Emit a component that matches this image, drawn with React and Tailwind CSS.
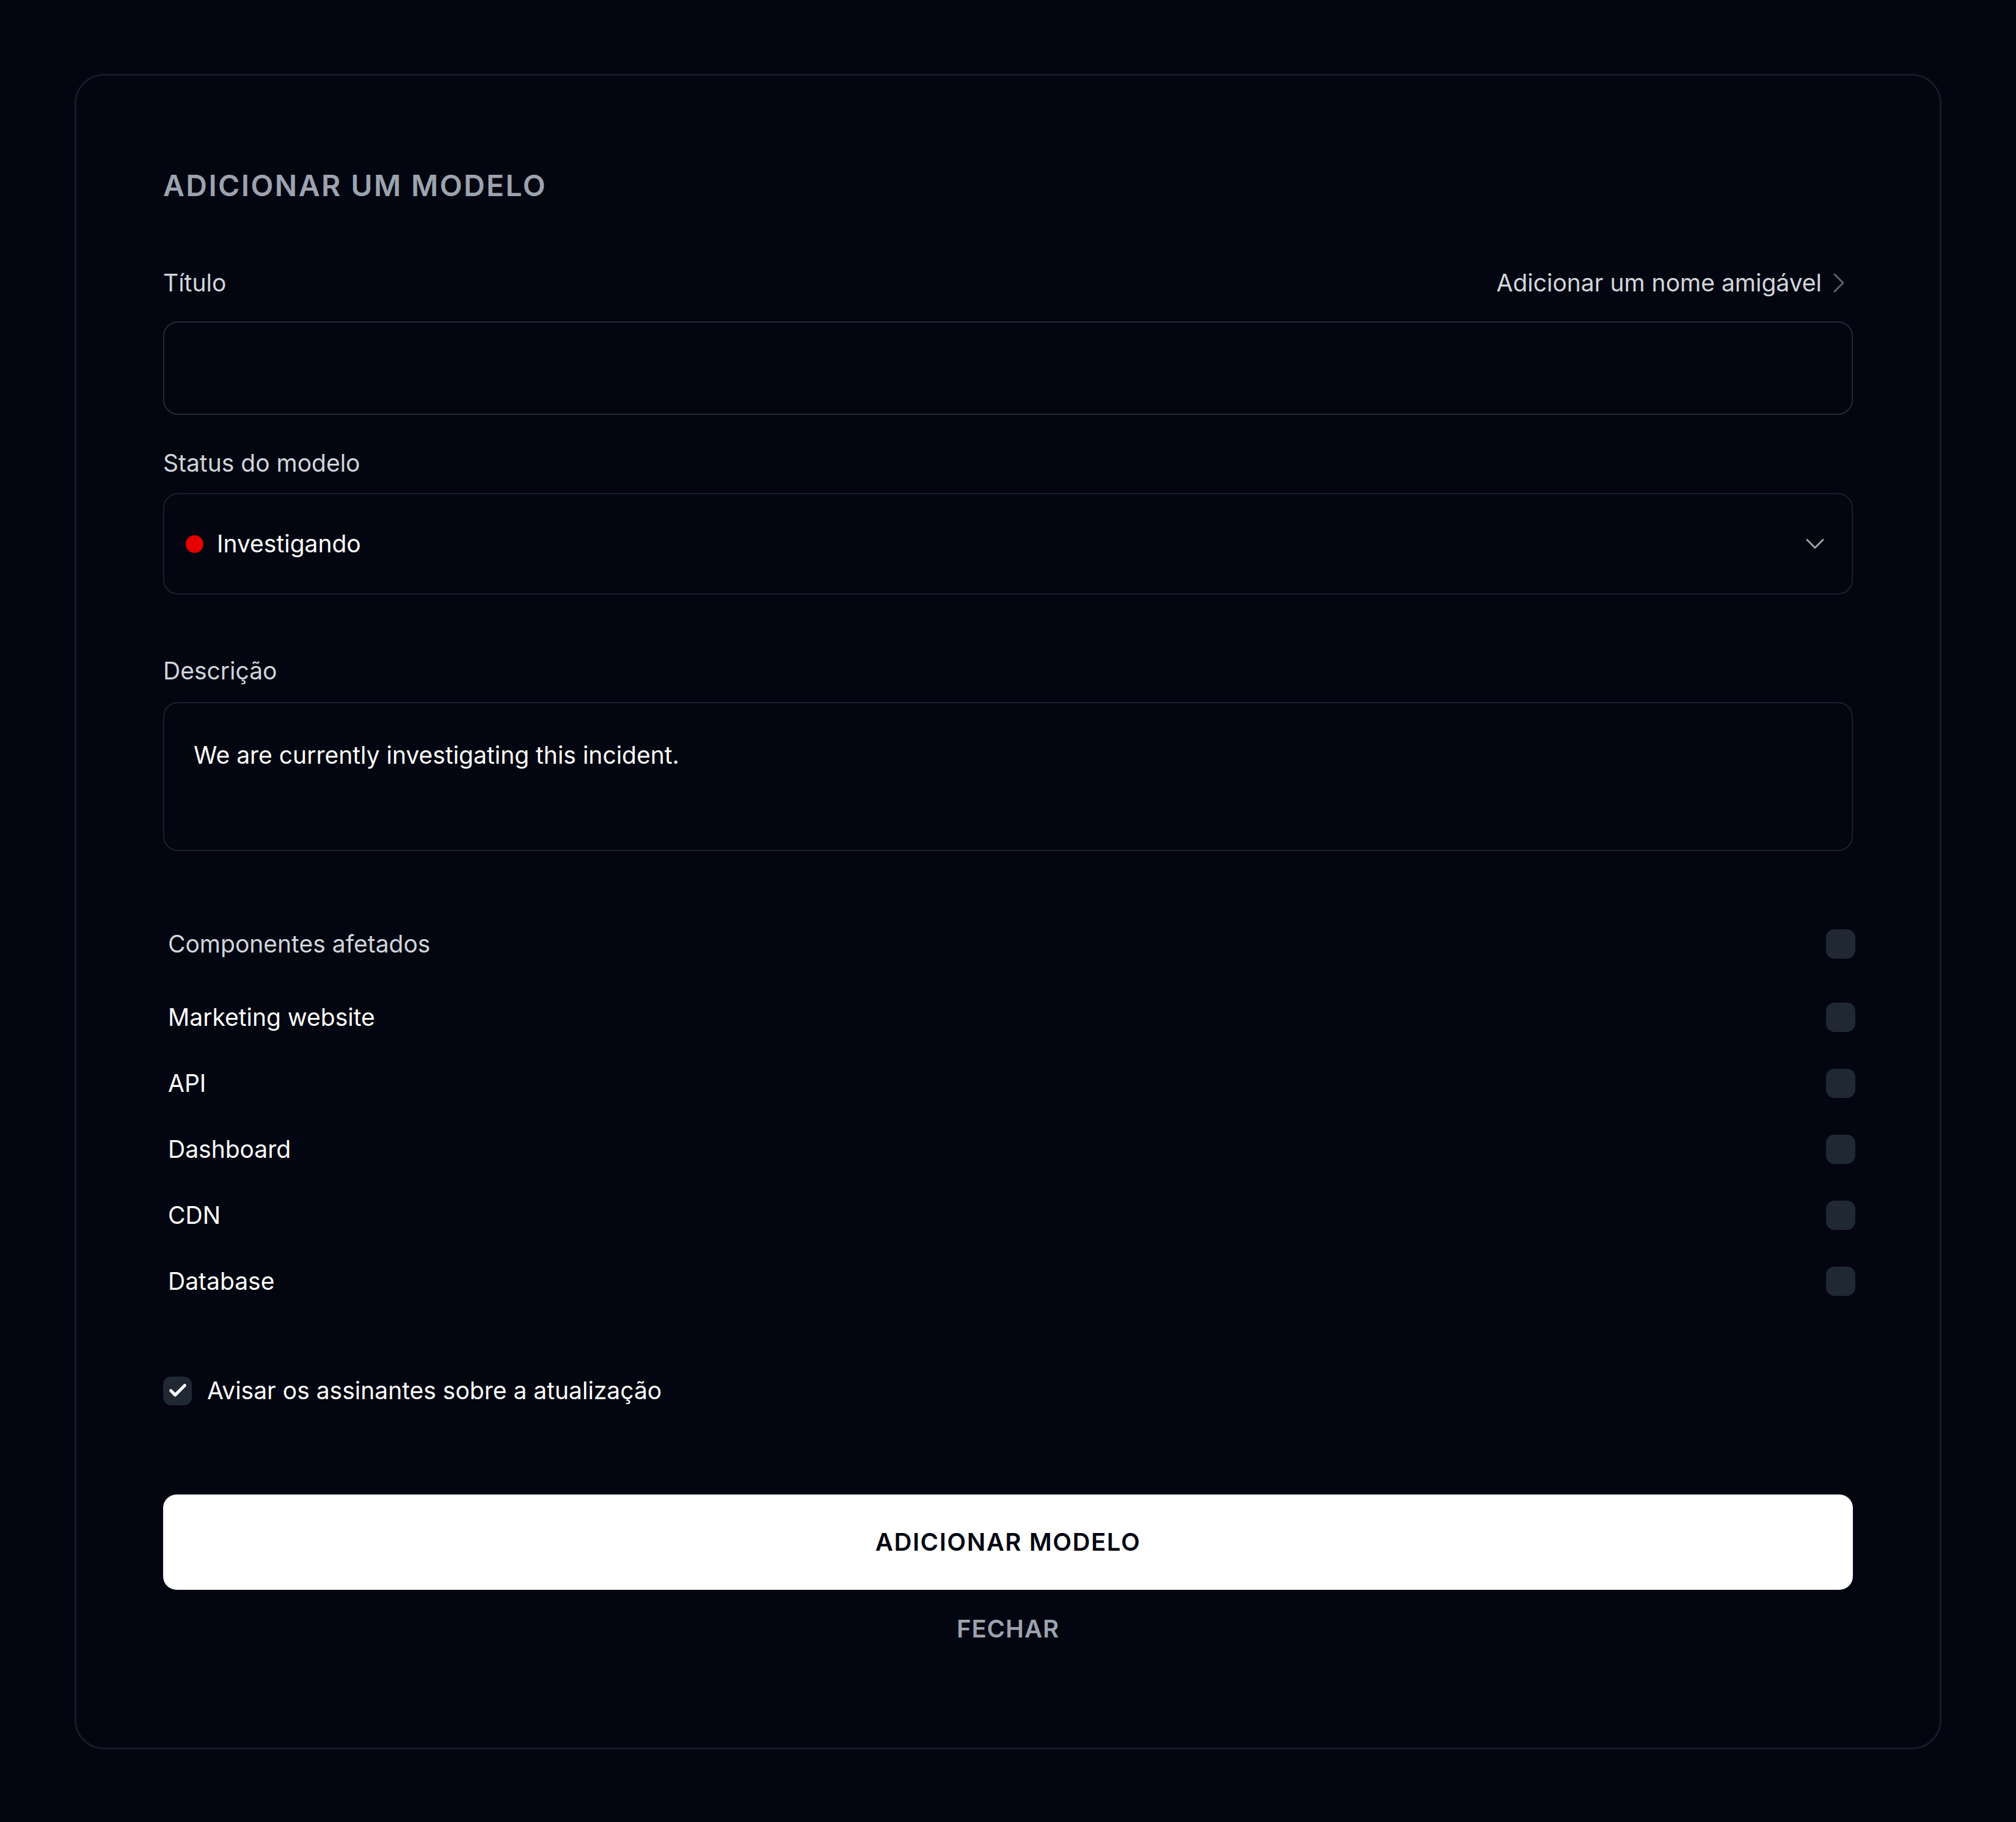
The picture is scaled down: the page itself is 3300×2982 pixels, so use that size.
import React from 'react';
import { Check, ChevronDown, ChevronRight } from 'lucide-react';

const components = ['Marketing website', 'API', 'Dashboard', 'CDN', 'Database'];

// dark rounded square used as the per-row toggle on the right
const RowBox = () => <div className="w-[48px] h-[48px] rounded-[14px] bg-[#1f2833] shrink-0" />;

const App = () => {
    return (
        <div className="min-h-screen bg-[#030610] px-[122px] pt-[121px] pb-[122px] font-['Inter','Noto_Sans',sans-serif]">
            <div className="rounded-[48px] border-[3px] border-[#151b27] bg-[#030610] px-[142px] pt-[156px] pb-[170px]">
                <h2 className="text-[48px] leading-[48px] font-semibold tracking-wider uppercase text-[#9ca3af]">Adicionar um modelo</h2>

                {/* Title */}
                <div className="mt-[107px] h-[56px] flex items-center justify-between">
                    <span className="text-[39px] leading-[48px] text-[#d1d5db]">Título</span>
                    <button className="flex items-center -mr-[5px] text-[39px] leading-[48px] text-[#d1d5db]">
                        <span>Adicionar um nome amigável</span>
                        <ChevronRight size={56} strokeWidth={1.3} className="text-[#5c616b]" />
                    </button>
                </div>
                <div className="mt-[35px] h-[153px] rounded-[24px] border-2 border-[#232b37]" />

                {/* Status */}
                <div className="mt-[55px] text-[39px] leading-[48px] text-[#d1d5db]">Status do modelo</div>
                <div className="mt-[25px] h-[166px] rounded-[24px] border-2 border-[#1a202c] flex items-center justify-between pl-[35px] pr-[34px]">
                    <div className="flex items-center gap-[22px]">
                        <span className="w-[29px] h-[29px] rounded-full bg-[#e60000]" />
                        <span className="text-[39px] leading-[48px] text-white">Investigando</span>
                    </div>
                    <ChevronDown size={52} strokeWidth={1.4} className="text-[#9ca3af]" />
                </div>

                {/* Description */}
                <div className="mt-[101px] text-[39px] leading-[48px] text-[#d1d5db]">Descrição</div>
                <div className="mt-[27px] h-[244px] rounded-[24px] border-2 border-[#1a202c] pl-[48px] pt-[61px]">
                    <p className="text-[39px] leading-[48px] text-white">We are currently investigating this incident.</p>
                </div>

                {/* Affected components */}
                <div className="mt-[98px] pl-[8px] -mr-[4px]">
                    <div className="h-[108px] mb-[12px] flex items-center justify-between">
                        <span className="text-[39px] leading-[48px] text-[#d1d5db]">Componentes afetados</span>
                        <RowBox />
                    </div>
                    {components.map((c) => (
                        <div key={c} className="h-[108px] flex items-center justify-between">
                            <span className="text-[39px] leading-[48px] text-white">{c}</span>
                            <RowBox />
                        </div>
                    ))}
                </div>

                {/* Notify */}
                <div className="mt-[101px] h-[48px] flex items-center gap-[25px]">
                    <div className="w-[47px] h-[47px] rounded-[13px] bg-[#1f2833] flex items-center justify-center">
                        <Check size={34} strokeWidth={3.6} className="text-white" />
                    </div>
                    <span className="text-[39px] leading-[48px] text-white">Avisar os assinantes sobre a atualização</span>
                </div>

                <button className="mt-[146px] w-full h-[156px] rounded-[22px] bg-white text-[40px] leading-[48px] font-semibold tracking-[0.04em] uppercase text-[#030712]">
                    Adicionar modelo
                </button>
                <div className="mt-[40px] text-center text-[40px] leading-[48px] font-semibold tracking-wide uppercase text-[#9ca3af]">Fechar</div>
            </div>
        </div>
    );
};

export default App;
